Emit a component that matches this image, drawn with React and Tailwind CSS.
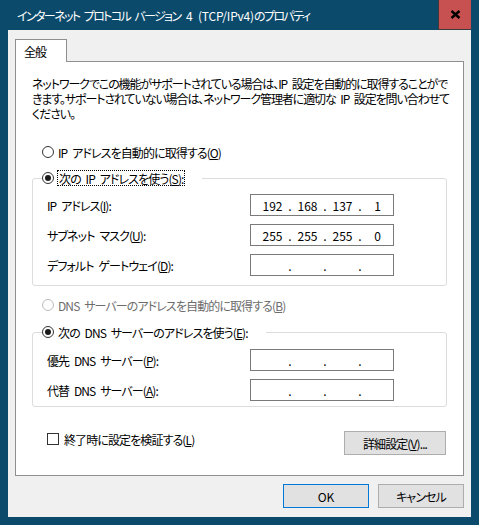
import React, { Fragment } from 'react';

// Propriétés IPv4 (boîte de dialogue Windows)

const Radio = ({ checked, disabled }) => (
  <span
    className={
      disabled
        ? 'w-[12px] h-[12px] shrink-0 rounded-full border border-[#bcbcbc] bg-white flex items-center justify-center'
        : 'w-[12px] h-[12px] shrink-0 rounded-full border border-[#333333] bg-white flex items-center justify-center'
    }
  >
    {checked && <span className="w-[6px] h-[6px] rounded-full bg-[#1a1a1a]" />}
  </span>
);

const IpBox = ({ values }) => (
  <div className="w-[144px] h-[22px] shrink-0 border border-[#7a7a7a] bg-white flex items-center pl-[8px] tracking-normal">
    {[0, 1, 2, 3].map((i) => (
      <Fragment key={i}>
        <span className="w-[27px] text-center">{values ? values[i] : ''}</span>
        {i < 3 && <span className="w-[8px] text-center">.</span>}
      </Fragment>
    ))}
  </div>
);

const Row = ({ label, values }) => (
  <div className="flex items-center pl-[14px]">
    <span className="w-[203px] whitespace-nowrap">{label}</span>
    <IpBox values={values} />
  </div>
);

const App = () => {
  return (
    <div className="w-[479px] h-[525px] bg-[#0b4a6b] flex flex-col text-[12px] leading-[15px] tracking-[-0.9px] [word-spacing:3px] text-black font-['Noto_Sans_CJK_JP',sans-serif] [font-feature-settings:'palt']">
      {/* barre de titre */}
      <div className="h-[30px] flex shrink-0">
        <div className="flex-1 flex items-center pl-[17px] pt-[1px] text-white whitespace-nowrap tracking-[-1.6px]">
          インターネット プロトコル バージョン <span className="tracking-[-0.2px]">&nbsp;4 (TCP/IPv4)</span>のプロパティ
        </div>
        <div className="w-[33px] h-[30px] mr-[8px] bg-[#c75050] border-l border-b border-[#3b3b3b] flex items-center justify-center">
          <svg width="11" height="9" viewBox="0 0 11 9">
            <path d="M1.5 1 L9.5 8 M9.5 1 L1.5 8" stroke="#000" strokeWidth="2.4" />
          </svg>
        </div>
      </div>

      {/* zone client */}
      <div className="mx-[8px] h-[487px] bg-[#f0f0f0] px-[7px] pt-[9px] flex flex-col">
        <div className="relative z-10 w-[52px] h-[23px] -mb-px border border-b-0 border-[#8f8f8f] bg-white pl-[8px] flex items-center">
          全般
        </div>

        <div className="h-[415px] border border-[#8f8f8f] bg-white px-[16px] pt-[14px] flex flex-col">
          <div className="whitespace-nowrap tracking-[-1.1px]">
            <div className="h-[15px]">ネットワークでこの機能がサポートされている場合は、IP 設定を自動的に取得することがで</div>
            <div className="h-[15px]">きます。サポートされていない場合は、ネットワーク管理者に適切な IP 設定を問い合わせて</div>
            <div className="h-[15px]">ください。</div>
          </div>

          <div className="mt-[23px] h-[16px] flex items-center pl-[10px] gap-[4px]">
            <Radio />
            <span>IP アドレスを自動的に取得する(<u>O</u>)</span>
          </div>

          <fieldset className="mt-[10px] border border-[#dcdcdc] rounded-[3px] px-0 pt-[8px] pb-[9px] flex flex-col gap-[8px]">
            <legend className="ml-[9px] pr-[17px] h-[16px] flex items-center gap-[3px]">
              <Radio checked />
              <span className="border border-dotted border-black px-[1px] h-[16px] flex items-center">
                次の IP アドレスを使う(<u>S</u>):
              </span>
            </legend>
            <Row label={<>IP アドレス(<u>I</u>):</>} values={['192', '168', '137', '1']} />
            <Row label={<>サブネット マスク(<u>U</u>):</>} values={['255', '255', '255', '0']} />
            <Row label={<>デフォルト ゲートウェイ(<u>D</u>):</>} />
          </fieldset>

          <div className="mt-[11px] h-[16px] flex items-center pl-[10px] gap-[4px] text-[#6d6d6d]">
            <Radio disabled />
            <span>DNS サーバーのアドレスを自動的に取得する(<u>B</u>)</span>
          </div>

          <fieldset className="mt-[11px] border border-[#dcdcdc] rounded-[3px] px-0 pt-[9px] pb-[5px] flex flex-col gap-[8px]">
            <legend className="ml-[9px] pr-[18px] h-[16px] flex items-center gap-[4px]">
              <Radio checked />
              <span>次の DNS サーバーのアドレスを使う(<u>E</u>):</span>
            </legend>
            <Row label={<>優先 DNS サーバー(<u>P</u>):</>} />
            <Row label={<>代替 DNS サーバー(<u>A</u>):</>} />
          </fieldset>

          <div className="mt-[24px] flex items-start justify-between pl-[15px] pr-[1px]">
            <div className="h-[16px] flex items-center gap-[5px]">
              <span className="w-[12px] h-[12px] border border-[#333333] bg-white" />
              <span>終了時に設定を検証する(<u>L</u>)</span>
            </div>
            <button className="w-[102px] h-[24px] border border-[#adadad] bg-[#e1e1e1]">
              詳細設定(<u>V</u>)...
            </button>
          </div>
        </div>

        <div className="mt-[8px] flex justify-end gap-[9px]">
          <button className="w-[86px] h-[24px] border border-[#0078d7] bg-[#e1e1e1] tracking-normal">OK</button>
          <button className="w-[86px] h-[24px] border border-[#adadad] bg-[#e1e1e1]">キャンセル</button>
        </div>
      </div>
    </div>
  );
};

export default App;
